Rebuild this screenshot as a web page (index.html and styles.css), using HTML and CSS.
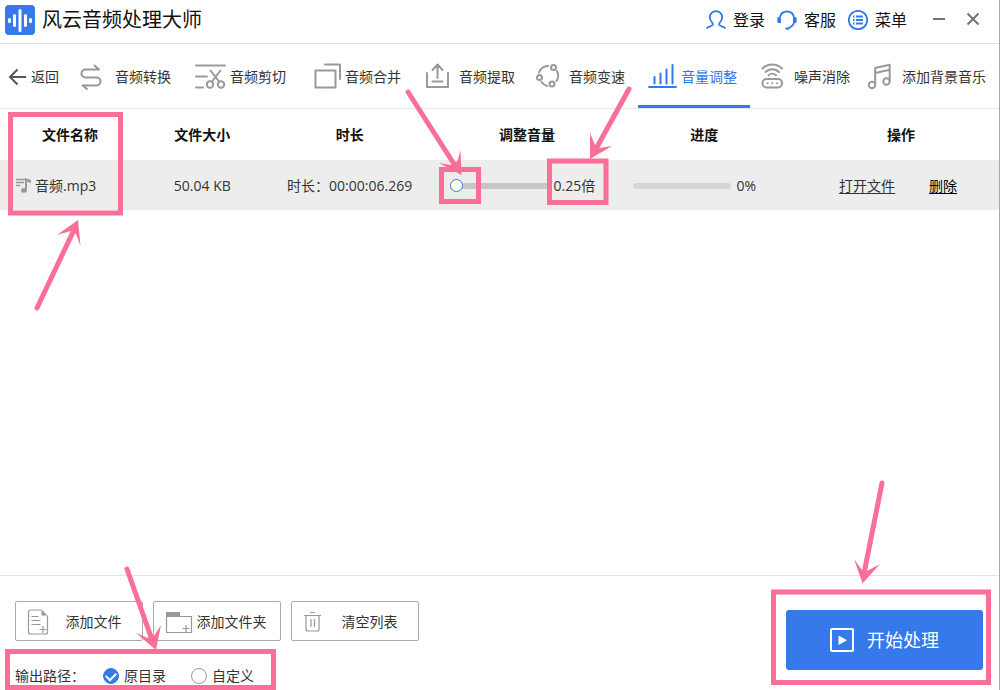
FILE: index.html
```html
<!DOCTYPE html>
<html lang="zh-CN">
<head>
<meta charset="utf-8">
<title>风云音频处理大师</title>
<link rel="stylesheet" href="styles.css">
</head>
<body>
<div class="window">
  <header class="titlebar">
    <svg class="logo" viewBox="0 0 30 30"><rect width="30" height="30" rx="4" fill="#3579ea"/><g stroke="#fff" stroke-width="3" stroke-linecap="round"><path d="M4.500 14.500v2M9.500 10.500v10M15 5.500v20M20.500 10.500v10M25.500 14.500v2"/></g></svg>
    <h1 class="app-name">风云音频处理大师</h1>
    <nav class="account">
      <button class="account-item"><svg class="icon-20" viewBox="0 0 20 20"><path d="M.5 18.500c1.500-2.500 6-2 6.500-4 .3-1.500-3.200-3-3.200-7.200a6.200 6.200 0 0 1 12.400 0c0 4.200-3.500 5.700-3.200 7.200.5 2 5 1.500 6.500 4"/></svg>登录</button>
      <button class="account-item"><svg class="icon-20" viewBox="0 0 20 20"><path d="M3 7a7.200 7.200 0 0 1 14 0M17 13c-1 3-3 4-5 5"/><path d="M1.800 8.500v3M18.200 8.500v3" stroke-width="3" stroke-linecap="round"/><path d="M3 7v6M17 7v6"/><ellipse cx="10.500" cy="18.500" rx="2.200" ry="1.200" fill="#3579ea" stroke="none"/></svg>客服</button>
      <button class="account-item"><svg class="icon-20" viewBox="0 0 20 20"><circle cx="10" cy="10" r="9.200"/><path d="M8 6.500h7M8 10h7M8 13.500h7M5 6.500h1.500M5 10h1.500M5 13.500h1.500"/></svg>菜单</button>
    </nav>
    <button class="win-btn" aria-label="最小化"><svg viewBox="0 0 24 24"><path d="M6 11h12"/></svg></button>
    <button class="win-btn" aria-label="关闭"><svg viewBox="0 0 24 24"><path d="M6.500 5.500l11 11M17.500 5.500l-11 11"/></svg></button>
  </header>

  <nav class="tabs">
    <button class="back"><svg class="icon-20" viewBox="0 0 20 20"><path d="M18 10H2M9.500 2.500L2 10l7.500 7.500"/></svg>返回</button>
    <button class="tab"><svg class="tab-icon" viewBox="0 0 36 30"><path d="M15.500 3.500L20 7.500H6.500a4 4 0 0 0 0 8h11a4 4 0 0 1 0 8H3.500L8 27"/></svg>音频转换</button>
    <button class="tab"><svg class="tab-icon" viewBox="0 0 36 30"><path d="M2 3.500h29M2 14.500h11M2 25.500h7M16.500 8.500l8.500 11M26.500 8.500l-8.500 11"/><circle cx="16" cy="22.500" r="3.200"/><circle cx="27" cy="22.500" r="3.200"/></svg>音频剪切</button>
    <button class="tab"><svg class="tab-icon" viewBox="0 0 36 30"><path d="M6.500 8.500h20v17h-20zM16 2.500h15V17"/></svg>音频合并</button>
    <button class="tab"><svg class="tab-icon" viewBox="0 0 36 30"><path d="M4 11v14h21V11M14.500 16V3M9.500 8l5-5.500 5 5.500M9.500 19.500h10"/></svg>音频提取</button>
    <button class="tab"><svg class="tab-icon" viewBox="0 0 36 30"><circle cx="20.500" cy="5.500" r="2.500"/><circle cx="6.500" cy="15.500" r="2.500"/><circle cx="19" cy="22" r="2.500"/><path d="M6 10.500a10 10 0 0 1 9-6.500M24 9a10 10 0 0 1-.5 10M8.500 20a10 10 0 0 0 5.500 4"/></svg>音频变速</button>
    <button class="tab tab-active" aria-current="page"><svg class="tab-icon" viewBox="0 0 36 30"><path d="M4 25h27M9.500 15v6.500M15.500 11.500v10M21.500 7.500v14M27.500 3v18.500"/></svg>音量调整</button>
    <button class="tab"><svg class="tab-icon" viewBox="0 0 36 30"><rect x="4.500" y="17" width="19.500" height="8.500" rx="4"/><path d="M9.500 21.200h.1M14.200 21.200h.1M19 21.200h.1M4.500 6.500a14 14 0 0 1 19.500 0M7.500 10a9.500 9.500 0 0 1 13.500 0M10.500 13.200a5.500 5.500 0 0 1 7.500 0"/></svg>噪声消除</button>
    <button class="tab"><svg class="tab-icon" viewBox="0 0 36 30"><circle cx="6" cy="23" r="3.200"/><circle cx="20.500" cy="19.500" r="3.200"/><path d="M9.200 22.500V6l14.500-3.200V19M9.200 11l14.500-3.200"/></svg>添加背景音乐</button>
  </nav>

  <main class="content">
    <table class="files">
      <thead>
        <tr><th class="col-name">文件名称</th><th class="col-size">文件大小</th><th class="col-time">时长</th><th class="col-volume">调整音量</th><th class="col-progress">进度</th><th class="col-action">操作</th></tr>
      </thead>
      <tbody>
        <tr>
          <td><div class="file-name"><svg class="note" viewBox="0 0 18 18"><path d="M1 2.500h9M1 5.500h8M1 8.500h4" stroke="#999" stroke-width="1.500"/><path d="M10 1l6 2v3l-4-1.300V13.500a3 2.300 0 1 1-2-2.200z" fill="#999"/></svg>音频.mp3</div></td>
          <td class="centered">50.04 KB</td>
          <td class="centered">时长：00:00:06.269</td>
          <td><div class="volume"><input class="slider" type="range" min="0.25" max="4" step="0.25" value="0.25" aria-label="调整音量"><span>0.25倍</span></div></td>
          <td><div class="progress"><progress class="bar" value="0" max="100" aria-label="进度"></progress><span>0%</span></div></td>
          <td><div class="actions"><a class="link" href="#open">打开文件</a><a class="link link-delete" href="#delete">删除</a></div></td>
        </tr>
      </tbody>
    </table>
  </main>

  <footer class="footer">
    <div class="footer-left">
      <div class="buttons">
        <button class="tool"><svg class="tool-icon" viewBox="0 0 28 28"><path d="M15 2H3.500a2 2 0 0 0-2 2v20a2 2 0 0 0 2 2h15a2 2 0 0 0 2-2V7.500M4.500 8.500h7M4.500 12.500h9M4.500 16.500h9M12.500 21.500h7M16 18v7"/><path d="M14.500 1.500v6h6z" fill="#999" stroke="none"/></svg><span class="tool-label">添加文件</span></button>
        <button class="tool"><svg class="tool-icon" viewBox="0 0 28 28"><path d="M1.500 8.500h25v16h-25zM17.500 20.500h7M21 17v7"/><path d="M1 4h14v4.500H1z" fill="#999" stroke="none"/></svg><span class="tool-label">添加文件夹</span></button>
        <button class="tool"><svg class="tool-icon" viewBox="0 0 28 28"><path d="M1 7.500h17M7 4.500h5M3 7.500V21a2 2 0 0 0 2 2h9a2 2 0 0 0 2-2V7.500M8 11v8M11.500 11v8"/></svg><span class="tool-label">清空列表</span></button>
      </div>
      <div class="output" role="radiogroup" aria-label="输出路径">
        <span class="output-label">输出路径：</span>
        <label class="choice"><input class="radio" type="radio" name="path" checked>原目录</label>
        <label class="choice"><input class="radio" type="radio" name="path">自定义</label>
      </div>
    </div>
    <button class="start"><svg class="start-icon" viewBox="0 0 24 24"><rect x="1" y="1" width="22" height="22" rx="1" fill="none" stroke="#fff" stroke-width="2"/><path d="M8.500 7.500v9.500l8.500-4.700z" fill="#fff"/></svg>开始处理</button>
  </footer>

  <svg class="notes" viewBox="0 0 1000 690" aria-hidden="true">
    <g fill="none" stroke="#f96f97" stroke-width="5">
      <rect x="10.500" y="114.500" width="110" height="98.500"/>
      <rect x="441.500" y="169.500" width="37" height="32"/>
      <rect x="549.500" y="161" width="56.500" height="41.500"/>
      <rect x="7.500" y="651.500" width="266" height="36"/>
      <rect x="773.500" y="592" width="215" height="90.500"/>
    </g>
    <g stroke="#f96f97" stroke-width="5" stroke-linecap="round">
      <path d="M37 308L73 232M408 92L454 164M629 89L597 147M127 569L151 637M882 483L864.500 571"/>
    </g>
    <g fill="#f96f97">
      <path d="M78 220L57 235 70.500 231 76 234 80.500 246z"/>
      <path d="M461.500 175L439 163 451 165 457.500 161 460.500 150z"/>
      <path d="M590 159L590 133 595 145 600 148 612 146z"/>
      <path d="M156 650L136 633 148 638 154 636 161 625z"/>
      <path d="M862.500 583.500L854 559 862 570 867 571 880 564z"/>
    </g>
  </svg>
</div>
</body>
</html>
```
FILE: styles.css
```css
* { box-sizing: border-box; }
body {
  margin: 0;
  background: #fff;
  color: #333;
  font: 14px/20px "Open Sans", "Noto Sans CJK SC", sans-serif;
}
button { font: inherit; color: inherit; background: none; border: 0; padding: 0; margin: 0; cursor: pointer; white-space: nowrap; }
svg { display: block; flex: none; }
.window {
  position: relative;
  display: flex;
  flex-direction: column;
  min-height: 100vh;
  overflow: hidden;
  border-right: 1px solid #aaa;
}

.titlebar { display: flex; align-items: center; height: 44px; padding: 0 14px 4px 5px; border-bottom: 1px solid #e0e0e0; }
.logo { width: 30px; height: 30px; }
.app-name { margin: 0 auto 0 7px; font-size: 20px; line-height: 28px; font-weight: 400; color: #111; }
.account { display: flex; gap: 12px; margin-right: 20px; }
.account-item { display: flex; align-items: center; gap: 7px; font-size: 16px; line-height: 24px; color: #111; }
.icon-20 { width: 20px; height: 20px; fill: none; stroke: #3579ea; stroke-width: 1.8; }
.win-btn { width: 24px; height: 24px; }
.win-btn + .win-btn { margin-left: 10px; }
.win-btn svg { width: 24px; height: 24px; fill: none; stroke: #71717c; stroke-width: 2; }

.tabs {
  display: grid;
  grid-template-columns: 70fr 114fr 115fr 115fr 114fr 110fr 112fr 113fr 136fr;
  height: 65px;
  border-bottom: 1px solid #e8e8e8;
}
.back { display: flex; align-items: center; gap: 3px; padding: 2px 0 0 8px; }
.back .icon-20 { stroke: #555; stroke-width: 2; }
.tab { display: flex; align-items: center; justify-content: flex-end; padding-right: 13px; border-top: 5px solid transparent; border-bottom: 3px solid transparent; }
.tab-icon { width: 36px; height: 30px; fill: none; stroke: #999; stroke-width: 2; stroke-linecap: round; stroke-linejoin: round; }
.tab-active { color: #3579ea; border-bottom-color: #3579ea; }
.tab-active .tab-icon { stroke: #3579ea; }

.content { flex: 1; }
.files { width: 100%; table-layout: fixed; border-collapse: collapse; }
.files th { height: 51px; padding: 0; color: #111; font-weight: 700; }
.files td { height: 50px; padding: 1px 0 0; background: #ededed; white-space: nowrap; }
.col-name { width: 14%; }
.col-size { width: 12.5%; }
.col-time { width: 17%; }
.col-volume { width: 18.5%; }
.col-progress { width: 17%; }
.files .col-action { padding-left: 14px; }
.centered { text-align: center; }
.file-name { display: flex; align-items: center; gap: 2px; padding-left: 15px; }
.note { width: 18px; height: 18px; }
.volume { display: flex; align-items: center; gap: 6px; padding-left: 15px; }
.slider { appearance: none; width: 98px; height: 14px; margin: 0; background: linear-gradient(#c6c6c6, #c6c6c6) center / 100% 6px no-repeat; }
.slider::-webkit-slider-thumb { appearance: none; width: 13px; height: 13px; border: 1px solid #3579ea; border-radius: 50%; background: #fff; }
.progress { display: flex; align-items: center; gap: 5px; padding-left: 14px; }
.bar { appearance: none; width: 98px; height: 6px; border: 0; border-radius: 3px; overflow: hidden; background: #d6d6d6; }
.bar::-webkit-progress-bar { background: #d6d6d6; }
.bar::-webkit-progress-value { background: #3579ea; }
.actions { display: flex; justify-content: center; gap: 34px; padding-left: 8px; }
.link { color: #333; text-underline-offset: 2px; }
.link-delete { color: #000; }

.footer { display: flex; justify-content: space-between; align-items: flex-start; height: 115px; padding: 25px 16px 0 15px; border-top: 1px solid #e4e4e4; }
.buttons { display: flex; gap: 10px; }
.tool { display: flex; align-items: center; width: 128px; height: 40px; padding: 1px 10px 0 11px; border: 1px solid #aaa; border-radius: 2px; }
.tool-icon { width: 28px; height: 28px; fill: none; stroke: #999; stroke-width: 1.2; }
.tool-label { flex: 1; text-align: center; }
.output { display: flex; align-items: center; margin-top: 25px; }
.output-label { width: 88px; }
.choice { display: flex; align-items: center; gap: 5px; margin-right: 25px; }
.radio { appearance: none; width: 16px; height: 16px; margin: 0; border: 1px solid #999; border-radius: 50%; background: #fff; display: grid; place-items: center; }
.radio:checked { border-color: #3579ea; background: #3579ea; }
.radio:checked::before { content: ""; width: 8px; height: 5px; border: solid #fff; border-width: 0 0 2px 2px; transform: rotate(-45deg); margin-bottom: 2px; }
.start { display: flex; align-items: center; justify-content: center; gap: 13px; width: 197px; height: 60px; margin-top: 9px; border-radius: 3px; background: #3579ea; color: #fff; font-size: 18px; line-height: 26px; }
.start-icon { width: 24px; height: 24px; }

.notes { position: absolute; top: 0; left: 0; width: 1000px; height: 690px; pointer-events: none; }
```
